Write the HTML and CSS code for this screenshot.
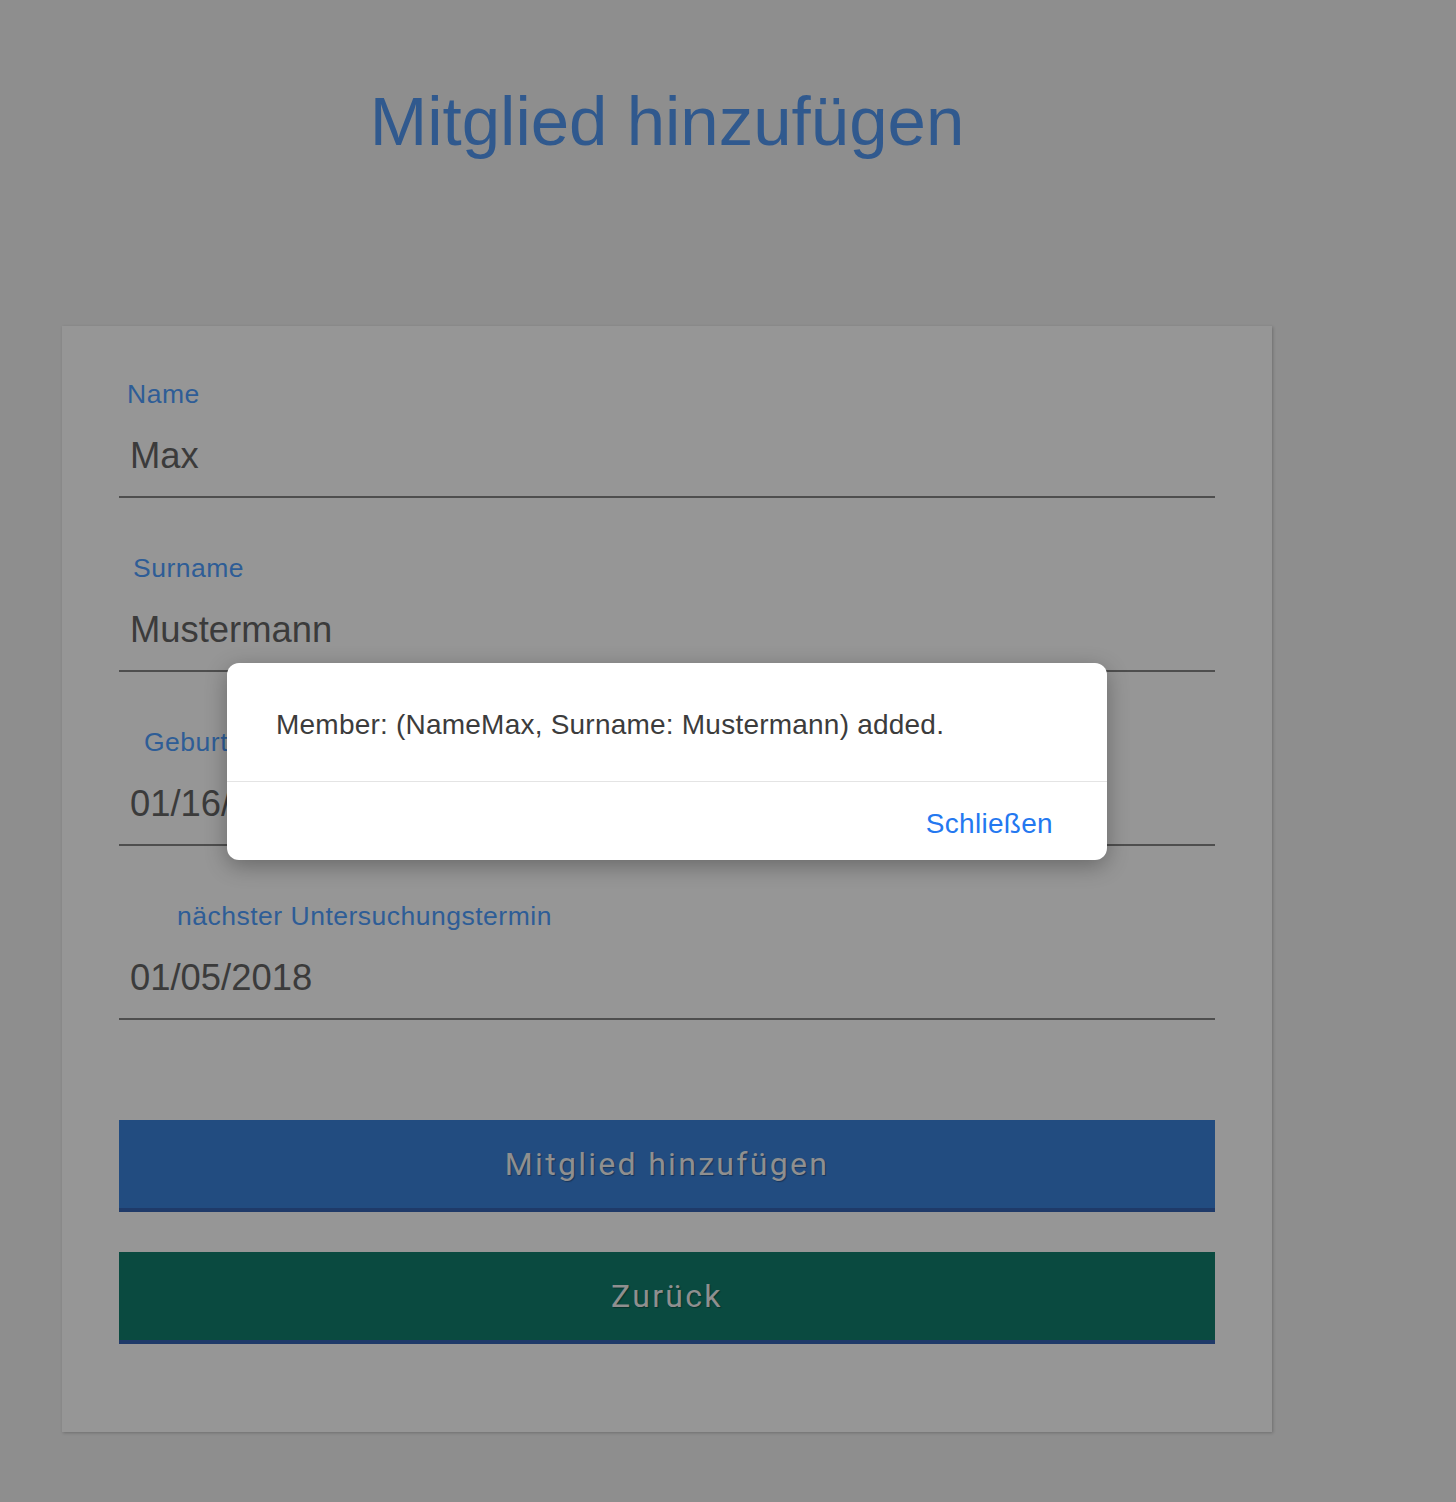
FILE: index.html
```html
<!DOCTYPE html>
<html lang="de">
<head>
<meta charset="utf-8">
<title>Mitglied hinzufügen</title>
<link rel="stylesheet" href="styles.css">
</head>
<body>
<div class="page">
  <h1 class="title">Mitglied hinzufügen</h1>
  <form class="card">
    <div class="field">
      <label class="label label-name">Name</label>
      <div class="value">Max</div>
    </div>
    <div class="field">
      <label class="label label-surname">Surname</label>
      <div class="value">Mustermann</div>
    </div>
    <div class="field">
      <label class="label label-birth">Geburtsdatum</label>
      <div class="value">01/16/1990</div>
    </div>
    <div class="field">
      <label class="label label-next">nächster Untersuchungstermin</label>
      <div class="value">01/05/2018</div>
    </div>
    <div class="actions">
      <button type="button" class="btn btn-primary">Mitglied hinzufügen</button>
      <button type="button" class="btn btn-back">Zurück</button>
    </div>
  </form>
  <div class="dialog" role="dialog">
    <div class="dialog-body">Member: (NameMax, Surname: Mustermann) added.</div>
    <div class="dialog-footer">
      <button type="button" class="dialog-btn">Schließen</button>
    </div>
  </div>
</div>
</body>
</html>
```
FILE: styles.css
```css
html, body {
  margin: 0;
  padding: 0;
  background: #8e8e8e;
}
body {
  font-family: "Liberation Sans", Arial, sans-serif;
  min-height: 1502px;
}
.page {
  position: relative;
  width: 1210px;
  margin-left: 62px;
}
.title {
  margin: 0;
  padding-top: 82px;
  font-size: 69px;
  line-height: 80px;
  font-weight: 400;
  text-align: center;
  color: #30598e;
}
.card {
  margin-top: 164px;
  background: #969696;
  box-shadow: 1px 1px 3px rgba(0, 0, 0, 0.22);
  padding: 53px 57px 88px;
}
.field {
  display: flex;
  flex-direction: column;
  border-bottom: 2px solid #4e4e4e;
  padding-bottom: 18px;
  margin-bottom: 55px;
}
.field:last-of-type {
  margin-bottom: 0;
}
.label {
  font-size: 26.5px;
  line-height: 30px;
  letter-spacing: 0.5px;
  color: #2e5d96;
  white-space: nowrap;
}
.label-name { padding-left: 8px; }
.label-surname { padding-left: 14px; }
.label-birth { padding-left: 25px; }
.label-next { padding-left: 58px; }
.value {
  margin-top: 25px;
  padding-left: 11px;
  font-size: 36.4px;
  line-height: 44px;
  color: #3b3b3b;
}
.actions {
  display: flex;
  flex-direction: column;
  gap: 40px;
  margin-top: 100px;
}
.btn {
  display: block;
  width: 100%;
  height: 92px;
  border: 0;
  border-bottom: 4px solid #1f3a69;
  margin: 0;
  padding: 0;
  font-family: Roboto, "Liberation Sans", sans-serif;
  font-size: 32px;
  letter-spacing: 2.3px;
  color: #8f8f8f;
  text-shadow: 1px 1px 1px rgba(0, 0, 0, 0.3);
  cursor: pointer;
}
.btn-primary { background: #224c80; }
.btn-back { background: #0a4a40; }
.dialog {
  position: absolute;
  left: 165px;
  top: 663px;
  width: 880px;
  background: #ffffff;
  border-radius: 12px;
  box-shadow: 0 6px 22px rgba(0, 0, 0, 0.3);
  overflow: hidden;
}
.dialog-body {
  padding: 45px 40px 39px 49px;
  font-size: 28px;
  line-height: 34px;
  letter-spacing: 0.22px;
  color: #3c3c3c;
  border-bottom: 1px solid #e4e4e4;
}
.dialog-footer {
  display: flex;
  justify-content: flex-end;
  padding: 25px 54px 19px;
}
.dialog-btn {
  background: none;
  border: 0;
  padding: 0;
  margin: 0;
  font-family: "Liberation Sans", Arial, sans-serif;
  font-size: 28px;
  line-height: 34px;
  letter-spacing: 0.3px;
  color: #2478f0;
  cursor: pointer;
}
```
